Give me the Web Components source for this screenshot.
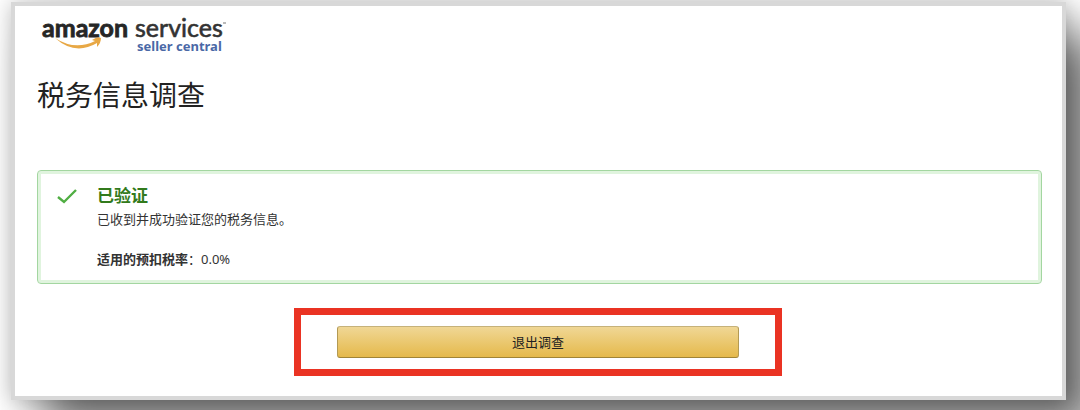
<!DOCTYPE html>
<html lang="zh-CN">
<head>
<meta charset="utf-8">
<meta name="viewport" content="width=device-width, initial-scale=1">
<title>税务信息调查</title>
<style>
html { background: #fff; }
body { margin: 0; overflow: hidden; font-family: "Noto Sans", "Noto Sans CJK SC", sans-serif; font-size: 13px; line-height: 20px; color: #333; }
</style>
</head>
<body>
<survey-page>
  <brand-logo slot="logo"></brand-logo>
  <span slot="title">税务信息调查</span>
  <status-alert>
    <span slot="heading">已验证</span>
    <span slot="message">已收到并成功验证您的税务信息。</span>
    <span slot="label">适用的预扣税率</span>
    <span slot="value">：0.0%</span>
  </status-alert>
  <exit-action slot="action">退出调查</exit-action>
</survey-page>
<script>
function define(name, html) {
  customElements.define(name, class extends HTMLElement {
    constructor() {
      super();
      this.attachShadow({ mode: 'open' }).innerHTML = html;
    }
  });
}

define('survey-page', `
  <style>
    :host { display: block; padding: 2px 14px 10px 11px; }
    main { box-sizing: border-box; border: 4px solid #d8d8d8; background: #fff; padding: 12px 20px 20px 22px;
      box-shadow: 32px 32px 44px rgba(0,0,0,.56), 0 0 20px rgba(0,0,0,.24); }
    h1 { margin: 21px 0 55px; font-size: 28px; line-height: 40px; font-weight: 400; color: #222; }
    footer { display: flex; justify-content: center; margin-top: 24px; padding-right: 3px; }
  </style>
  <main>
    <header><slot name="logo"></slot><h1><slot name="title"></slot></h1></header>
    <slot></slot>
    <footer><slot name="action"></slot></footer>
  </main>`);

define('brand-logo', `
  <style>
    :host { display: block; }
    svg { display: block; overflow: visible; }
    .name { font: 700 25px Lato, sans-serif; fill: #262626; stroke: #262626; stroke-width: .8; }
    .services { font: 400 25px Lato, sans-serif; fill: #333; stroke: #333; stroke-width: .6; }
    .sub { font: 700 13px "Noto Sans", sans-serif; fill: #4a68a6; }
  </style>
  <svg width="200" height="36" viewBox="37 18 200 36" role="img" aria-label="amazon services seller central">
    <text class="name" x="42" y="37">amazon</text>
    <text class="services" x="135" y="37">services</text>
    <text class="sub" x="137" y="51">seller central</text>
    <path d="M55 38 Q75 51 95 41 L92 40 Q98 36 101 38 Q101 43 97 47 L97 43 Q75 56 55 38Z" fill="#e8a845"/>
    <path d="M223 23h3" stroke="#777"/>
  </svg>`);

define('status-alert', `
  <style>
    :host { display: block; }
    section { display: grid; grid-template-columns: 20px 1fr; column-gap: 20px; padding: 14px 20px 14px 19px;
      border: 1px solid #a3d6a0; border-radius: 4px; box-shadow: inset 0 0 0 3px #e0f4de; }
    svg { width: 20px; height: 16px; margin-top: 3px; }
    h2 { margin: 0; font-size: 17px; line-height: 22px; color: #327a1c; }
    p { margin: 2px 0 20px; }
    p:last-child { margin: 0; }
  </style>
  <section role="status">
    <svg viewBox="0 0 20 16" fill="none" stroke="#50ae43" stroke-width="2.4" aria-hidden="true"><path d="M1 9l6 5L19 2"/></svg>
    <div>
      <h2><slot name="heading"></slot></h2>
      <p><slot name="message"></slot></p>
      <p><b><slot name="label"></slot></b><slot name="value"></slot></p>
    </div>
  </section>`);

define('exit-action', `
  <style>
    :host { display: block; box-sizing: border-box; width: 100%; max-width: 488px; border: 7px solid #ea3323; padding: 11px 36px; }
    button { display: block; width: 100%; height: 32px; padding: 0; font: inherit; color: #222; border: 1px solid;
      border-color: #c6b27a #b39a54 #a08436; border-radius: 3px; background: linear-gradient(#f0d795, #e5b94b); cursor: pointer; }
  </style>
  <button type="button"><slot></slot></button>`);
</script>
</body>
</html>
